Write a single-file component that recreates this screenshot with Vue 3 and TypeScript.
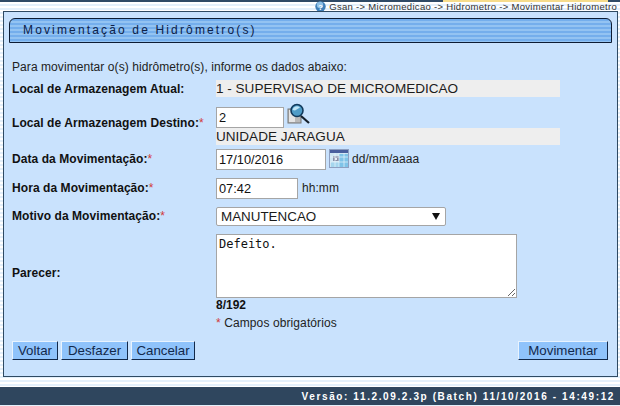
<script setup lang="ts">
const crumbs: string = 'Gsan -> Micromedicao -> Hidrometro -> Movimentar Hidrometro'
</script>

<template>
  <div class="page">
    <div class="topbar"></div>
    <div class="crumbs">
      <svg class="help" width="11" height="11" viewBox="0 0 11 11">
        <circle cx="5.5" cy="5.5" r="5.2" fill="#3f7fb8" />
        <circle cx="5" cy="4" r="3.2" fill="#8fc0e6" />
        <text x="5.5" y="8.6" text-anchor="middle" font-size="8" font-weight="700" fill="#fff" font-family="Liberation Sans">?</text>
      </svg>
      <span>{{ crumbs }}</span>
    </div>
    <main class="panel">
      <header class="title"><h1>Movimentação de Hidrômetro(s)</h1></header>
      <p class="intro">Para movimentar o(s) hidrômetro(s), informe os dados abaixo:</p>

      <div class="row r-atual">
        <label>Local de Armazenagem Atual:</label>
        <div class="readonly">1 - SUPERVISAO DE MICROMEDICAO</div>
      </div>

      <div class="row r-destino">
        <label class="l-destino">Local de Armazenagem Destino:<i>*</i></label>
        <div class="stack">
          <div class="inline">
            <input class="inp w68" value="2" />
            <svg class="lens" width="24" height="24" viewBox="0 0 24 24">
              <rect x="1" y="6" width="13" height="14" fill="#b9b9b9" stroke="#777" />
              <rect x="2" y="7" width="6" height="12" fill="#e4e4e4" />
              <line x1="14" y1="13" x2="22" y2="20" stroke="#15202c" stroke-width="2.2" />
              <circle cx="10" cy="7.5" r="6" fill="#4f9cc7" stroke="#123a5c" stroke-width="1.6" />
              <path d="M5.5 7 A4.5 4.5 0 0 1 13 4.5 L8 7.5 Z" fill="#bfe4f5" />
            </svg>
          </div>
          <div class="readonly">UNIDADE JARAGUA</div>
        </div>
      </div>

      <div class="row r-data">
        <label class="l-up">Data da Movimentação:<i>*</i></label>
        <div class="inline">
          <input class="inp w110" value="17/10/2016" />
          <svg class="cal" width="20" height="20" viewBox="0 0 20 20">
            <rect x="0.5" y="0.5" width="19" height="18" fill="#cfe6f3" stroke="#8e9fc0" />
            <rect x="1" y="1" width="18" height="3" fill="#4a5f9e" />
            <rect x="10" y="5" width="9" height="13" fill="#7fc3e8" />
            <rect x="2" y="13" width="8" height="5" fill="#a5d6ee" />
            <rect x="4" y="7" width="6" height="5" fill="#8a8fa8" />
            <rect x="6" y="9" width="2" height="2" fill="#e8eef5" />
            <path d="M1 8h18M1 13h18M6 4v14M10 4v14M15 4v14" stroke="#e9f4fa" stroke-width="0.7" fill="none" />
          </svg>
          <span class="hint">dd/mm/aaaa</span>
        </div>
      </div>

      <div class="row r-hora">
        <label class="l-up">Hora da Movimentação:<i>*</i></label>
        <div class="inline">
          <input class="inp w82" value="07:42" />
          <span class="hint h2">hh:mm</span>
        </div>
      </div>

      <div class="row r-motivo">
        <label class="l-up">Motivo da Movimentação:<i>*</i></label>
        <div class="select">
          <span>MANUTENCAO</span>
          <svg width="8" height="7" viewBox="0 0 8 7"><path d="M0 0h8L4 7z" fill="#111" /></svg>
        </div>
      </div>

      <div class="row r-parecer">
        <label class="l-parecer">Parecer:</label>
        <textarea class="area" spellcheck="false">Defeito.</textarea>
      </div>

      <div class="row r-count">
        <span></span>
        <b class="count">8/192</b>
      </div>
      <div class="row r-req">
        <span></span>
        <span class="req"><i>*</i> Campos obrigatórios</span>
      </div>

      <div class="actions">
        <div class="group">
          <button class="b1">Voltar</button>
          <button class="b2">Desfazer</button>
          <button class="b3">Cancelar</button>
        </div>
        <button class="go">Movimentar</button>
      </div>
    </main>
    <footer class="foot">Versão: 11.2.09.2.3p (Batch) 11/10/2016 - 14:49:12</footer>
  </div>
</template>

<style>
html, body { margin: 0; padding: 0; background: #fff; }
</style>

<style scoped>
.page {
  width: 620px;
  height: 406px;
  overflow: hidden;
  display: flex;
  flex-direction: column;
  position: relative;
  font-family: "Liberation Sans", Arial, sans-serif;
  color: #111;
  background: repeating-linear-gradient(to bottom, #e4f0fb 0, #e4f0fb 2px, #fff 2px, #fff 4px);
}
.topbar {
  height: 2px;
  flex: none;
  background: linear-gradient(to right, #2f4a66 0, #2f4a66 443px, #f6dc8c 443px, #f6dc8c 608px, #2f4a66 608px);
}
.crumbs {
  height: 9px;
  flex: none;
  display: flex;
  justify-content: flex-end;
  align-items: center;
  gap: 3px;
  padding-right: 3px;
  font-size: 9.5px;
  letter-spacing: 0.3px;
  color: #333;
  line-height: 9px;
}
.help { flex: none; }
.panel {
  flex: none;
  height: 366px;
  margin: 0 2px 0 3px;
  box-sizing: border-box;
  border: 1px solid #2f4a62;
  background: #c9e2fd;
  padding: 6px 5px 0 5px;
}
.title {
  height: 25px;
  box-sizing: border-box;
  border: 1px solid #0d1c33;
  background: repeating-linear-gradient(to bottom, #74aeec 0, #74aeec 2px, #93c3f2 2px, #93c3f2 4px);
  padding-left: 13px;
  border-radius: 6px 6px 0 0;
}
.title h1 {
  margin: 0;
  font-size: 12px;
  font-weight: 400;
  letter-spacing: 2.15px;
  line-height: 22px;
  color: #0d2148;
}
.intro { margin: 17px 0 0 3px; font-size: 12px; letter-spacing: 0.07px; line-height: 14px; color: #222; }
.row {
  display: grid;
  grid-template-columns: 204px 1fr;
  align-items: center;
  margin-left: 3px;
  font-size: 12px;
}
label { font-weight: 700; color: #111; letter-spacing: 0.07px; }
i { color: #d23a3a; font-style: normal; font-weight: 400; }
.l-destino { align-self: start; margin-top: 9px; }
.l-up { padding-bottom: 1px; }
.l-parecer { padding-top: 14px; }
.r-atual { margin-top: 6px; height: 17px; }
.readonly {
  background: #eeeeee;
  width: 344px;
  height: 17px;
  font-size: 13.55px;
  line-height: 17px;
  color: #1c1c1c;
}
.r-destino { margin-top: 10px; }
.stack { display: flex; flex-direction: column; }
.inline { display: flex; align-items: center; }
.inp {
  box-sizing: border-box;
  height: 21px;
  border: 1px solid #a5a5a5;
  background: #fff;
  padding: 0 2px 1px;
  margin: 0;
  font: 12.8px "Liberation Sans", Arial, sans-serif;
  color: #111;
  outline: none;
}
.w68 { width: 68px; }
.w110 { width: 110px; }
.w82 { width: 82px; }
.lens { margin: -6px 0 0 3px; }
.cal { margin: -1px 0 0 3px; }
.hint { margin-left: 3px; padding-bottom: 1px; font-size: 12px; letter-spacing: 0.05px; color: #222; }
.h2 { margin-left: 4px; }
.r-data { margin-top: 4px; }
.r-hora { margin-top: 8px; }
.r-motivo { margin-top: 8px; }
.select {
  box-sizing: border-box;
  width: 230px;
  height: 19px;
  background: #fff;
  border: 1px solid #a5a5a5;
  border-radius: 2px;
  display: flex;
  align-items: center;
  justify-content: space-between;
  padding: 0 5px 1px 4px;
  font-size: 13.4px;
  color: #1a1a1a;
}
.r-parecer { margin-top: 8px; }
.area {
  box-sizing: border-box;
  width: 301px;
  height: 64px;
  display: block;
  margin: 0;
  border: 1px solid #a5a5a5;
  padding: 2px;
  background: #fff;
  outline: none;
  font: 12px "DejaVu Sans Mono", "Liberation Mono", monospace;
  color: #111;
}
.r-count { margin-top: 0; height: 14px; }
.count { font-size: 12px; color: #111; }
.r-req { margin-top: 4px; height: 14px; }
.req { font-size: 12px; letter-spacing: 0.1px; color: #222; }
.actions {
  margin: 11px 0 0 3px;
  width: 596px;
  display: flex;
  justify-content: space-between;
}
.group { display: flex; gap: 3px; }
button {
  box-sizing: border-box;
  height: 19px;
  padding: 0;
  background: #8fc3fb;
  border: 1px solid;
  border-color: #e8f3fe #12294a #12294a #e8f3fe;
  font: 13.3px "Liberation Sans", Arial, sans-serif;
  line-height: 16px;
  color: #13294b;
  margin: 0;
}
.b1 { width: 46px; }
.b2 { width: 67px; }
.b3 { width: 64px; }
.go { width: 90px; }
.foot {
  position: absolute;
  left: 0;
  right: 0;
  top: 387px;
  height: 18px;
  background: #2f465e;
  color: #fff;
  font-size: 10px;
  font-weight: 700;
  letter-spacing: 1.61px;
  line-height: 19px;
  text-align: right;
  padding-right: 5px;
  box-sizing: border-box;
}
</style>
